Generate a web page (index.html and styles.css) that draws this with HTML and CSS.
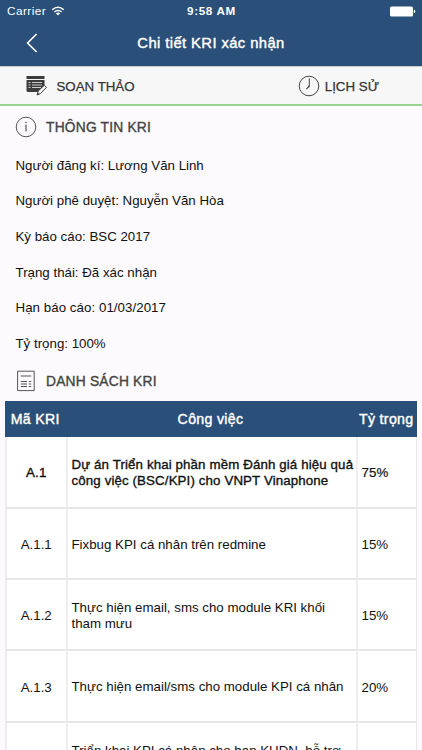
FILE: index.html
```html
<!DOCTYPE html>
<html lang="vi">
<head>
<meta charset="utf-8">
<title>Chi tiết KRI xác nhận</title>
<link rel="stylesheet" href="styles.css">
</head>
<body>
<div class="screen">
  <header class="header">
    <div class="status">
      <div class="carrier"><span class="carrier-name">Carrier</span>
        <svg class="wifi" width="14" height="10" viewBox="0 0 14 10" fill="none" stroke="#fff" stroke-width="1.5"><path d="M1.2 3.7Q7-1.3 12.8 3.7M3.4 5.9Q7 3 10.6 5.9"/><path d="M7 9.4 4.9 7.3Q7 5.8 9.1 7.3Z" fill="#fff" stroke="none"/></svg>
      </div>
      <span class="time">9:58 AM</span>
      <svg class="battery" width="26" height="11" viewBox="0 0 26 11" fill="#fff"><rect x="0" y="0.4" width="23" height="10.2" rx="1.6"/><path d="M23.8 3.6Q25.3 4.2 25.3 5.5T23.8 7.4Z"/></svg>
    </div>
    <nav class="nav">
      <svg class="back" width="12" height="20" viewBox="0 0 12 20" fill="none" stroke="#fff" stroke-width="1.6"><path d="M10.6 1 1.6 10l9 9"/></svg>
      <h1 class="title">Chi tiết KRI xác nhận</h1>
    </nav>
  </header>
  <div class="tabs">
    <div class="tab">
      <svg width="22" height="21" viewBox="0 0 22 21"><path d="M.5 1H18.5V4H.5ZM.5 5H18.5V13L15 17H1.5L.5 16Z" fill="#3c3c3c"/><path d="M2.5 7.5h2M6 7.5h10M2.5 10h2M6 10h10M2.5 12.5h2M6 12.5h9" stroke="#ddd" stroke-width=".9"/><path d="m11 20 1.3-4 6-5.8 2.2 2.1-6 6.2Z" fill="#f7f7f7" stroke="#3c3c3c" stroke-width="1"/><path d="m11 20 .8-2.2 1.6 1.4Z" fill="#3c3c3c"/></svg>
      <span class="tab-text">SOẠN THẢO</span>
    </div>
    <div class="tab history">
      <svg width="22" height="22" viewBox="0 0 22 22" fill="none" stroke="#444"><circle cx="11" cy="11" r="9.8" stroke-width="1"/><path d="M11.3 3.4V11.2L8 14.2" stroke-width="1"/><path d="m10.5 10.5 1.5 1-3.7 3Z" fill="#444" stroke="none"/></svg>
      <span class="tab-text">LỊCH SỬ</span>
    </div>
  </div>
  <h2 class="section">
    <svg width="22" height="22" viewBox="0 0 22 22" fill="none" stroke="#555"><circle cx="11" cy="11" r="9.8" stroke-width="1"/><path d="M11 8.8V15.6" stroke-width="1.2"/><circle cx="11" cy="6.5" r=".8" fill="#555" stroke="none"/></svg>
    <span>THÔNG TIN KRI</span>
  </h2>
  <div class="info">
    <p>Người đăng kí: Lương Văn Linh</p>
    <p>Người phê duyệt: Nguyễn Văn Hòa</p>
    <p>Kỳ báo cáo: BSC 2017</p>
    <p>Trạng thái: Đã xác nhận</p>
    <p class="date">Hạn báo cáo: 01/03/2017</p>
    <p>Tỷ trọng: 100%</p>
  </div>
  <h2 class="section list">
    <svg width="22" height="22" viewBox="0 0 22 22" fill="none" stroke="#555"><path d="M2.6 1.2H19.2V20.6H2.6Z" stroke-width="1"/><path d="M5.8 6H16.2" stroke-width="1"/><path d="M5.8 11.5H12M5.8 14H12M5.8 16.5H12M13.8 11.5H16.2M13.8 14H16.2M13.8 16.5H16.2" stroke-width="1.1"/></svg>
    <span>DANH SÁCH KRI</span>
  </h2>
  <div class="table">
    <div class="row head"><div>Mã KRI</div><div>Công việc</div><div>Tỷ trọng</div></div>
    <div class="row strong"><div>A.1</div><div class="task"><span>Dự án Triển khai phần mềm Đánh giá hiệu quả</span><span>công việc (BSC/KPI) cho VNPT Vinaphone</span></div><div class="weight">75%</div></div>
    <div class="row"><div>A.1.1</div><div class="task"><span>Fixbug KPI cá nhân trên redmine</span></div><div>15%</div></div>
    <div class="row"><div>A.1.2</div><div class="task"><span>Thực hiện email, sms cho module KRI khối</span><span>tham mưu</span></div><div>15%</div></div>
    <div class="row"><div>A.1.3</div><div class="task"><span>Thực hiện email/sms cho module KPI cá nhân</span></div><div>20%</div></div>
    <div class="row"><div></div><div class="task"><span>Triển khai KPI cá nhân cho ban KHDN, hỗ trợ</span><span>&nbsp;</span></div><div></div></div>
  </div>
</div>
</body>
</html>
```
FILE: styles.css
```css
* { box-sizing: border-box; }
body, h1, h2, p { margin: 0; }
body {
  font-family: "Liberation Sans", Arial, sans-serif;
  font-size: 13.3px;
  color: #111;
  background: #fcfafc;
}
.screen { width: 422px; height: 750px; overflow: hidden; }
svg { flex: none; display: block; }

.header { height: 66px; background: #2a4f78; color: #fff; }
.status {
  display: grid;
  grid-template-columns: 1fr auto 1fr;
  align-items: center;
  height: 22px;
  padding: 0 6px 0 7px;
  font-size: 11.8px;
}
.carrier { display: flex; align-items: center; gap: 5px; }
.carrier-name { letter-spacing: .45px; }
.time { font-weight: bold; font-size: 11.7px; letter-spacing: .65px; padding-bottom: 1px; }
.battery { justify-self: end; }
.nav {
  display: grid;
  grid-template-columns: 38px 1fr 38px;
  align-items: center;
  height: 42px;
}
.back { justify-self: end; }
.title {
  text-align: center;
  font-size: 14.8px;
  font-weight: normal;
  letter-spacing: .4px;
  -webkit-text-stroke: .4px #fff;
}

.tabs {
  display: flex;
  justify-content: space-between;
  height: 40px;
  padding: 0 43px 0 26px;
  border-top: 1px solid #c9ccd2;
  border-bottom: 2px solid #9bd492;
  background: #f7f7f7;
}
.tab { display: flex; align-items: center; gap: 8.5px; }
.history { gap: 5px; }
.tab-text { font-size: 13.3px; color: #333; -webkit-text-stroke: .25px #333; padding-top: 1px; }

.section {
  display: flex;
  align-items: center;
  gap: 9px;
  height: 41px;
  padding-left: 15px;
  font-size: 13.8px;
  font-weight: normal;
  letter-spacing: .2px;
  color: #444;
  -webkit-text-stroke: .35px #444;
}
.section span { padding-top: 1px; }
.info { display: grid; grid-auto-rows: 35.65px; align-items: center; padding-left: 15.5px; }
.info p { padding-top: 1px; }
.date { letter-spacing: .05px; }
.list { height: 40px; }

.table { margin: 0 5px; border-right: 1px solid #e8e8e8; }
.row {
  display: grid;
  grid-template-columns: 60.5px 290px 1fr;
  height: 71.3px;
  border-bottom: 2px solid #e7e7e7;
  background: #fff;
}
.row > div {
  display: flex;
  align-items: center;
  border-left: 2px solid #eee;
  padding-left: 4px;
  padding-top: 2px;
  white-space: nowrap;
}
.row > div:first-child { justify-content: center; padding-left: 0; }
.row > .task { flex-direction: column; align-items: flex-start; justify-content: center; line-height: 15.6px; }
.head { height: 36px; border: 0; background: #2a4f78; color: #fff; font-size: 14.2px; margin-right: -1px; }
.row.head > div { border: 0; padding: 1px 0 0; justify-content: center; -webkit-text-stroke: .4px #fff; letter-spacing: .3px; }
.strong { height: 72px; letter-spacing: .12px; -webkit-text-stroke: .35px #111; }
.strong .weight { -webkit-text-stroke-width: .2px; }
```
